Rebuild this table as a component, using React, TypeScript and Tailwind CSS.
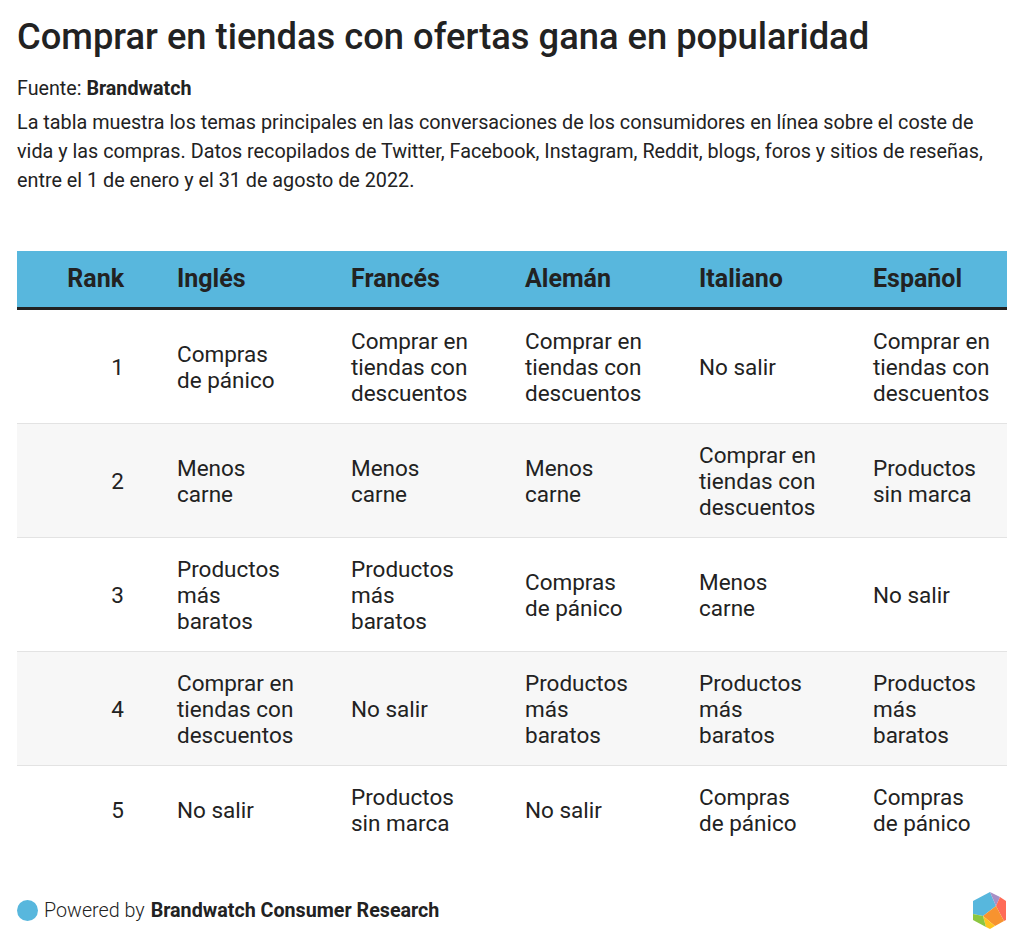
import React from "react";

const rows: string[][] = [
  ["1", "Compras de pánico", "Comprar en tiendas con descuentos", "Comprar en tiendas con descuentos", "No salir", "Comprar en tiendas con descuentos"],
  ["2", "Menos carne", "Menos carne", "Menos carne", "Comprar en tiendas con descuentos", "Productos sin marca"],
  ["3", "Productos más baratos", "Productos más baratos", "Compras de pánico", "Menos carne", "No salir"],
  ["4", "Comprar en tiendas con descuentos", "No salir", "Productos más baratos", "Productos más baratos", "Productos más baratos"],
  ["5", "No salir", "Productos sin marca", "No salir", "Compras de pánico", "Compras de pánico"],
];

const headers = ["Inglés", "Francés", "Alemán", "Italiano", "Español"];

function Logo() {
  return (
    <svg width="34" height="37" viewBox="0 0 34 37">
      <polygon points="0,9 17,0 23,14 10,24 0,22" fill="#57b7dd" />
      <polygon points="17,0 27,5 23,14" fill="#a78fc6" />
      <polygon points="27,5 33,9 33,28 31,29 23,14" fill="#ff6b57" />
      <polygon points="23,14 31,29 22,34 10,24" fill="#f7932f" />
      <polygon points="10,24 22,34 17,37 13,35" fill="#ffc31f" />
      <polygon points="0,22 10,24 13,35 0,28" fill="#8cc63f" />
    </svg>
  );
}

export default function App() {
  return (
    <div className="w-[1024px] h-[951px] bg-white text-[#222222] px-[17px] pt-[14px] flex flex-col" style={{ fontFamily: "Roboto, 'Noto Sans', sans-serif" }}>
      <h1 className="text-[36.3px] leading-[46px] font-medium">Comprar en tiendas con ofertas gana en popularidad</h1>
      <div className="mt-[17px] text-[19.7px] leading-[24px]">
        Fuente: <span className="font-bold">Brandwatch</span>
      </div>
      <p className="mt-[7px] text-[19.8px] leading-[29px]">
        La tabla muestra los temas principales en las conversaciones de los consumidores en línea sobre el coste de vida y las compras. Datos recopilados de Twitter, Facebook, Instagram, Reddit, blogs, foros y sitios de reseñas, entre el 1 de enero y el 31 de agosto de 2022.
      </p>
      <div className="mt-[56px] w-[990px]">
        <div className="grid grid-cols-[143px_174px_174px_174px_174px_151px] h-[56px] bg-[#58b7dd] border-b-[3px] border-[#222222] box-content items-center text-[25px] font-bold">
          <div className="text-right pr-[36px]">Rank</div>
          {headers.map((h) => (
            <div key={h} className="pl-[17px]">{h}</div>
          ))}
        </div>
        {rows.map((r, i) => (
          <div
            key={i}
            className={`grid grid-cols-[143px_174px_174px_174px_174px_151px] items-center pt-[18px] pb-[17px] text-[22.5px] leading-[26px] ${i % 2 === 1 ? "bg-[#f7f7f7]" : "bg-white"} ${i < rows.length - 1 ? "border-b border-[#e3e3e3]" : ""}`}
          >
            <div className="text-right pr-[36px]">{r[0]}</div>
            {r.slice(1).map((c, j) => (
              <div key={j} className="pl-[17px]">
                <div className="w-[119.5px]">{c}</div>
              </div>
            ))}
          </div>
        ))}
      </div>
      <div className="mt-auto mb-[22px] flex items-center justify-between">
        <div className="flex items-center gap-[6px] text-[19.7px]">
          <span className="w-[21px] h-[21px] rounded-full bg-[#58b7dd] inline-block" />
          <span className="font-light">Powered by</span>
          <span className="font-bold">Brandwatch Consumer Research</span>
        </div>
        <Logo />
      </div>
    </div>
  );
}
